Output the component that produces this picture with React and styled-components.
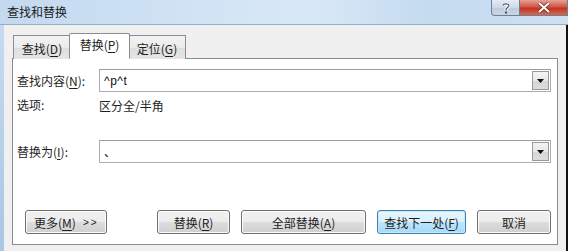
import React from "react";
import styled, { createGlobalStyle, css } from "styled-components";

const Global = createGlobalStyle`
  html, body { margin: 0; padding: 0; background: #f0f0f0; }
  body { font-family: "Noto Sans CJK SC", "Noto Sans", sans-serif; font-size: 12px; color: #1e1e1e; }
  * { box-sizing: border-box; }
`;

const Window = styled.div`
  width: 568px;
  height: 251px;
  display: flex;
  flex-direction: column;
  overflow: hidden;
  background: #f0f0f0;
`;

const TitleBar = styled.div`
  height: 25px;
  flex: none;
  display: flex;
  align-items: flex-start;
  justify-content: space-between;
  border-bottom: 1px solid #97adc4;
  background: linear-gradient(90deg, #c3d9ef 0%, #cfe2f4 30%, #d9e8f6 55%, #c5dbf0 75%, #cde0f3 100%);
`;

const Title = styled.div`
  padding: 4px 0 0 7px;
  font-size: 12px;
  line-height: 16px;
  color: #1a1a1a;
`;

const Caption = styled.div`
  display: flex;
  height: 16px;
`;

const CapButton = styled.div`
  height: 16px;
  display: flex;
  align-items: center;
  justify-content: center;
  border: 1px solid #6d7f95;
  border-top: none;
  ${(p) =>
    p.close
      ? css`
          width: 48px;
          border-radius: 0 0 0 0;
          border-left: none;
          background: linear-gradient(180deg, #e8a194 0%, #d2574a 45%, #c03523 55%, #d46b55 100%);
        `
      : css`
          width: 29px;
          border-radius: 0 0 0 4px;
          background: linear-gradient(180deg, #e4ecf4 0%, #cdd9e6 50%, #bccbdb 51%, #c9d7e5 100%);
        `}
`;

const Body = styled.div`
  flex: 1;
  display: flex;
  min-height: 0;
`;

const LeftFrame = styled.div`
  width: 4px;
  background: linear-gradient(180deg, #c6dbef, #a9c6e4);
`;

const RightFrame = styled.div`
  width: 2px;
  background: #111;
`;

const Main = styled.div`
  flex: 1;
  padding: 8px 8px 6px 8px;
  display: flex;
  flex-direction: column;
`;

const TabBar = styled.div`
  display: flex;
  align-items: flex-end;
  padding-left: 1px;
  height: 26px;
  position: relative;
  z-index: 1;
  margin-bottom: -1px;
`;

const Tab = styled.div`
  display: flex;
  align-items: center;
  justify-content: center;
  border: 1px solid #898c95;
  color: #1e1e1e;
  font-size: 12px;
  ${(p) =>
    p.active
      ? css`
          width: 61px;
          height: 26px;
          margin: 0 -1px;
          background: #ffffff;
          border-bottom-color: #ffffff;
          border-radius: 2px 2px 0 0;
          padding-bottom: 3px;
          position: relative;
          z-index: 2;
        `
      : css`
          width: ${p.w || 57}px;
          height: 24px;
          background: linear-gradient(180deg, #f3f3f3 0%, #ebebeb 50%, #dedede 51%, #e6e6e6 100%);
          border-bottom: none;
          padding-top: 1px;
          &:first-child { border-right: none; }
          &:last-child { border-left: none; }
        `}
`;

const U = styled.span`
  text-decoration: underline;
  text-underline-offset: 2px;
`;

const Panel = styled.div`
  flex: 1;
  background: #ffffff;
  border: 1px solid #898c95;
  padding: 10px 6px 10px 4px;
  display: flex;
  flex-direction: column;
`;

const FieldRow = styled.div`
  display: flex;
  align-items: center;
  height: 23px;
  margin-top: ${(p) => p.mt || 0}px;
`;

const Label = styled.div`
  width: 82px;
  flex: none;
  color: #1e1e1e;
  line-height: 16px;
`;

const Combo = styled.div`
  flex: 1;
  height: 23px;
  display: flex;
  align-items: center;
  border: 1px solid #abadb3;
  border-top-color: #9a9ca3;
  background: #fff;
  padding: 0 1px 0 4px;
`;

const ComboText = styled.div`
  flex: 1;
  font-family: "Liberation Sans", "Noto Sans CJK SC", sans-serif;
  font-size: 12px;
  color: #111;
  letter-spacing: 0.5px;
`;

const DropButton = styled.div`
  width: 17px;
  height: 19px;
  display: flex;
  align-items: center;
  justify-content: center;
  border: 1px solid #9a9a9a;
  background: linear-gradient(180deg, #f4f4f4 0%, #e8e8e8 50%, #d6d6d6 51%, #dcdcdc 100%);
`;

const OptionRow = styled.div`
  display: flex;
  align-items: center;
  height: 16px;
  margin-top: 5px;
`;

const Buttons = styled.div`
  margin-top: auto;
  display: flex;
  align-items: center;
  padding-left: 8px;
`;

const Group = styled.div`
  margin-left: auto;
  display: flex;
  gap: 11px;
`;

const Button = styled.div`
  width: ${(p) => p.w}px;
  height: 24px;
  display: flex;
  align-items: center;
  justify-content: ${(p) => (p.left ? "flex-start" : "center")};
  padding-left: ${(p) => (p.left ? 8 : 0)}px;
  border-radius: 3px;
  font-size: 12px;
  color: #1e1e1e;
  ${(p) =>
    p.focus
      ? css`
          border: 1px solid #3c7fb1;
          background: linear-gradient(180deg, #eaf6fd 0%, #d9f0fc 50%, #bee6fd 51%, #a7d9f5 100%);
          box-shadow: inset 0 0 0 1px #c8e8f8;
        `
      : css`
          border: 1px solid #707070;
          background: linear-gradient(180deg, #f2f2f2 0%, #ebebeb 50%, #dddddd 51%, #cfcfcf 100%);
          box-shadow: inset 0 0 0 1px #fbfbfb;
        `}
`;

const Arrows = styled.span`
  font-family: "Liberation Sans", sans-serif;
  font-size: 10px;
  margin-left: 7px;
  letter-spacing: 2px;
`;

export default function App() {
  return (
    <>
      <Global />
      <Window>
        <TitleBar>
          <Title>查找和替换</Title>
          <Caption>
            <CapButton>
              <svg width="10" height="12" viewBox="0 0 10 12">
                <path d="M2 3.5 C2 1.5 8 1.2 8 3.6 C8 5.6 5 5.6 5 7.8 V8.5" fill="none" stroke="#fff" strokeWidth="3" />
                <path d="M2 3.5 C2 1.5 8 1.2 8 3.6 C8 5.6 5 5.6 5 7.8 V8.5" fill="none" stroke="#4a5566" strokeWidth="1.2" />
                <rect x="4" y="9.6" width="2" height="2" fill="#4a5566" />
              </svg>
            </CapButton>
            <CapButton close>
              <svg width="14" height="11" viewBox="0 0 14 11">
                <path d="M2 1 L12 10 M12 1 L2 10" stroke="#7a2a20" strokeWidth="3.4" />
                <path d="M2 1 L12 10 M12 1 L2 10" stroke="#fff" strokeWidth="2" />
              </svg>
            </CapButton>
          </Caption>
        </TitleBar>
        <Body>
          <LeftFrame />
          <Main>
            <TabBar>
              <Tab w={57}>
                查找(<U>D</U>)
              </Tab>
              <Tab active>
                替换(<U>P</U>)
              </Tab>
              <Tab w={57}>
                定位(<U>G</U>)
              </Tab>
            </TabBar>
            <Panel>
              <FieldRow>
                <Label>
                  查找内容(<U>N</U>):
                </Label>
                <Combo>
                  <ComboText>^p^t</ComboText>
                  <DropButton>
                    <svg width="7" height="4" viewBox="0 0 7 4">
                      <path d="M0 0 H7 L3.5 4 Z" fill="#111" />
                    </svg>
                  </DropButton>
                </Combo>
              </FieldRow>
              <OptionRow>
                <Label>选项:</Label>
                <div>区分全/半角</div>
              </OptionRow>
              <FieldRow mt={27}>
                <Label>
                  替换为(<U>I</U>):
                </Label>
                <Combo>
                  <ComboText>、</ComboText>
                  <DropButton>
                    <svg width="7" height="4" viewBox="0 0 7 4">
                      <path d="M0 0 H7 L3.5 4 Z" fill="#111" />
                    </svg>
                  </DropButton>
                </Combo>
              </FieldRow>
              <Buttons>
                <Button w={82} left>
                  更多(<U>M</U>)<Arrows>&gt;&gt;</Arrows>
                </Button>
                <Group>
                  <Button w={73}>
                    替换(<U>R</U>)
                  </Button>
                  <Button w={125}>
                    全部替换(<U>A</U>)
                  </Button>
                  <Button w={89} focus>
                    查找下一处(<U>F</U>)
                  </Button>
                  <Button w={74}>取消</Button>
                </Group>
              </Buttons>
            </Panel>
          </Main>
          <RightFrame />
        </Body>
      </Window>
    </>
  );
}
